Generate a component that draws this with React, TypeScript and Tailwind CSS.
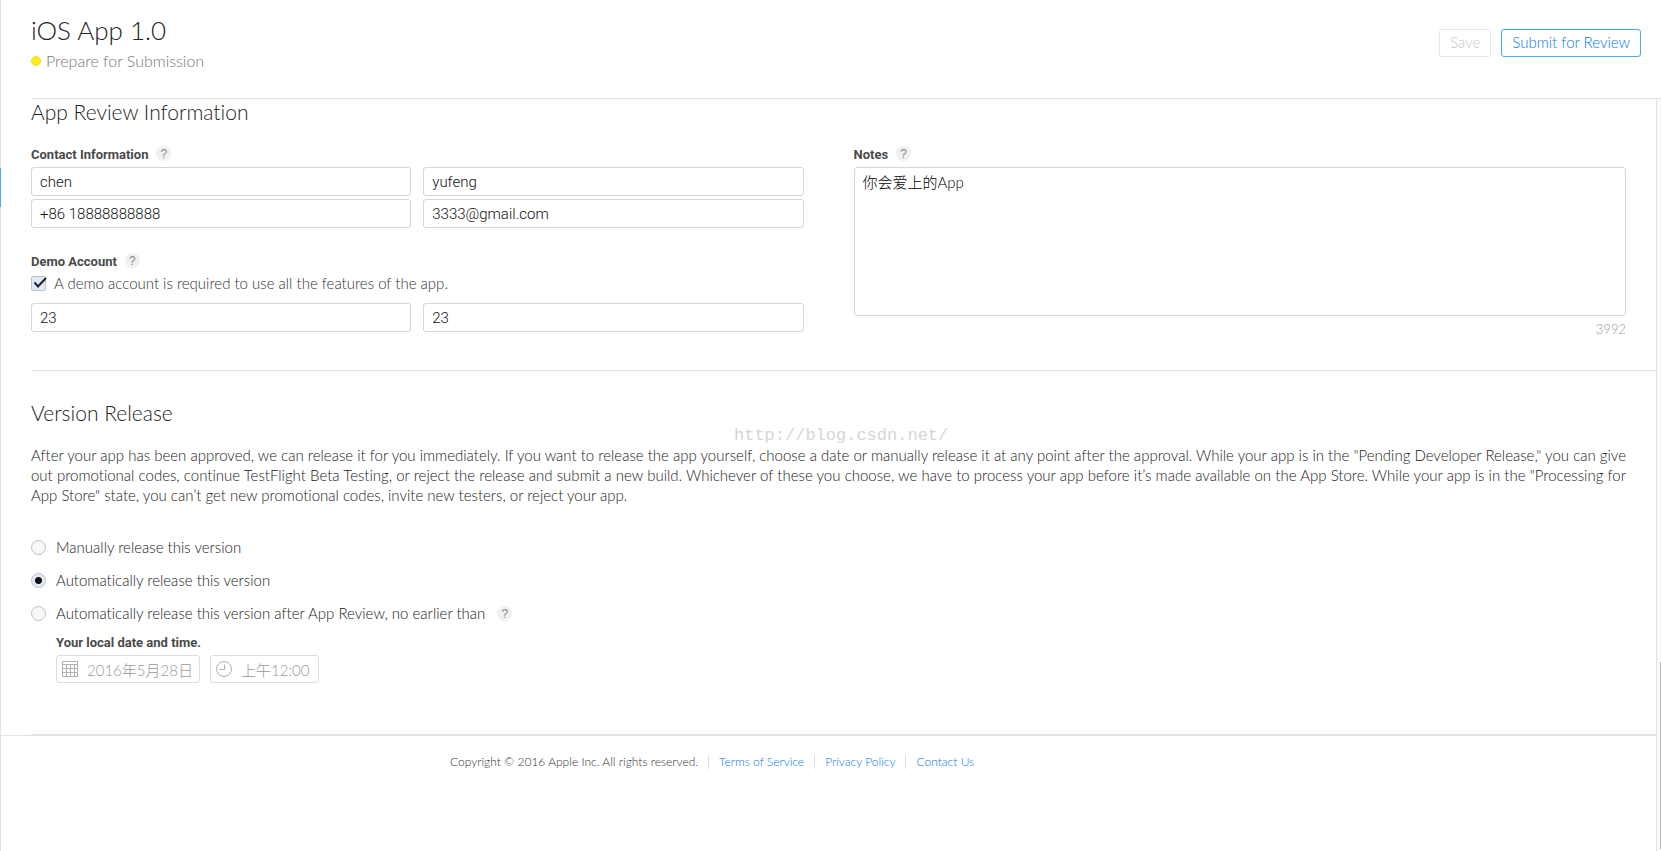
import { useState } from "react"
import clsx from "clsx"

const releaseOptions = [
  { id: "manual", label: "Manually release this version" },
  { id: "auto", label: "Automatically release this version" },
  {
    id: "scheduled",
    label: "Automatically release this version after App Review, no earlier than",
    help: true,
  },
]

const footerLinks = ["Terms of Service", "Privacy Policy", "Contact Us"]

const labelStyle = "font-['Roboto',sans-serif] text-[13px] leading-[18px] font-bold text-[#4a4a4a]"

const HelpButton = ({ label }: { label: string }) => (
  <button
    type="button"
    aria-label={label}
    className="flex size-[15px] shrink-0 items-center justify-center rounded-full bg-[#f0f0f2] font-['Liberation_Sans',sans-serif] text-xs leading-none text-[#888]"
  >
    ?
  </button>
)

const TextField = ({ label, value }: { label: string; value: string }) => (
  <input
    type="text"
    aria-label={label}
    defaultValue={value}
    className="h-[29px] w-full min-w-0 rounded-[3px] border border-[#d6d6d6] bg-white px-2 font-['Roboto',sans-serif] text-[15px] text-[#111] outline-none focus:border-[#4ba8fb]"
  />
)

const CalendarIcon = () => (
  <svg viewBox="0 0 16 16" className="size-4 shrink-0" fill="none" stroke="#b0b0b0" aria-hidden="true">
    <path d="M.5.5h15v15H.5z" />
    <path d="M1 3.5h14M1 7.5h14M1 11.5h14M4.5 4v11M8.5 4v11M12.5 4v11" />
  </svg>
)

const ClockIcon = () => (
  <svg viewBox="0 0 16 16" className="size-4 shrink-0" fill="none" stroke="#b0b0b0" aria-hidden="true">
    <circle cx="8" cy="8" r="7.5" />
    <path d="M8.5 3.5v5h-5" />
  </svg>
)

const Header = () => (
  <header className="ml-[30px] flex h-[99px] items-start justify-between border-b border-[#e3e3e3] pr-5">
    <div className="pt-[14px]">
      <h1 className="text-[26px] leading-[32px] text-[#222]">iOS App 1.0</h1>
      <p className="flex items-center gap-[5px] text-base leading-[30px] text-[#777]">
        <span className="size-[10px] rounded-full border border-[#f0dc1e] bg-[#ffec1f]" />
        Prepare for Submission
      </p>
    </div>
    <div className="flex gap-[10px] pt-[29px] text-[15px]">
      <button
        type="button"
        disabled
        className="h-7 rounded-[3px] border border-[#e5e5e5] px-[10px] pb-[2px] text-[#c8c8c8]"
      >
        Save
      </button>
      <button
        type="button"
        className="h-7 rounded-[3px] border border-[#4ba8fb] px-[10px] pb-[2px] text-[#007af5]"
      >
        Submit for Review
      </button>
    </div>
  </header>
)

const ReviewInformation = () => {
  const [demoRequired, setDemoRequired] = useState(true)

  return (
    <section className="ml-[30px] h-[272px] border-b border-[#e3e3e3] pr-[30px]">
      <h2 className="text-[21px] leading-[26px] text-[#222]">App Review Information</h2>
      <div className="mt-[21px] grid grid-cols-2 gap-[50px]">
        <div>
          <div className="flex h-[21px] items-start gap-2">
            <h3 className={labelStyle}>Contact Information</h3>
            <HelpButton label="About contact information" />
          </div>
          <div className="grid grid-cols-2 gap-x-3 gap-y-[3px]">
            <TextField label="First name" value="chen" />
            <TextField label="Last name" value="yufeng" />
            <TextField label="Phone number" value="+86 18888888888" />
            <TextField label="Email" value="3333@gmail.com" />
          </div>

          <div className="mt-[25px] flex h-[20px] items-start gap-2">
            <h3 className={labelStyle}>Demo Account</h3>
            <HelpButton label="About the demo account" />
          </div>
          <label className="flex h-[20px] items-center gap-2 text-[15px] text-[#333]">
            <span className="grid size-[15px]">
              <input
                type="checkbox"
                checked={demoRequired}
                onChange={(e) => setDemoRequired(e.target.checked)}
                className="col-start-1 row-start-1 size-[15px] appearance-none rounded-[2px] border border-[#c0c0c4] bg-[#f8f8f8] checked:bg-[#dfeafa]"
              />
              {demoRequired && (
                <svg
                  viewBox="0 0 15 15"
                  className="pointer-events-none col-start-1 row-start-1 size-[15px] overflow-visible"
                  fill="none"
                  stroke="#222"
                  strokeWidth="2"
                  aria-hidden="true"
                >
                  <path d="M3.5 6.5 7 10.5 15 2" />
                </svg>
              )}
            </span>
            A demo account is required to use all the features of the app.
          </label>
          <div className="mt-[10px] grid grid-cols-2 gap-x-3">
            <TextField label="Demo user name" value="23" />
            <TextField label="Demo password" value="23" />
          </div>
        </div>

        <div>
          <div className="flex h-[21px] items-start gap-2">
            <label htmlFor="notes" className={labelStyle}>
              Notes
            </label>
            <HelpButton label="About notes" />
          </div>
          <textarea
            id="notes"
            defaultValue="你会爱上的App"
            className="block h-[149px] w-full resize-none rounded-[3px] border border-[#d6d6d6] px-2 py-[4px] text-[15px] leading-[20px] text-black outline-none focus:border-[#4ba8fb]"
          />
          <p className="mt-[3px] text-right text-[13px] leading-[20px] text-[#999]">3992</p>
        </div>
      </div>
    </section>
  )
}

const VersionRelease = () => {
  const [release, setRelease] = useState("auto")

  return (
    <section className="ml-[30px] h-[364px] border-b border-[#e3e3e3] pt-[29px] pr-[30px]">
      <h2 className="text-[21px] leading-[26px] text-[#222]">Version Release</h2>
      <p className="mt-[19px] text-justify text-[15px] leading-[20px] text-[#222]">
        After your app has been approved, we can release it for you immediately. If you want to release the app
        yourself, choose a date or manually release it at any point after the approval. While your app is in the
        "Pending Developer Release," you can give out promotional codes, continue TestFlight Beta Testing, or
        reject the release and submit a new build. Whichever of these you choose, we have to process your app
        before it’s made available on the App Store. While your app is in the "Processing for App Store" state,
        you can’t get new promotional codes, invite new testers, or reject your app.
      </p>

      <div role="radiogroup" aria-label="Version release" className="mt-[26px]">
        {releaseOptions.map((option) => (
          <div key={option.id} className="flex h-[33px] items-center gap-3">
            <label className="flex items-center gap-[10px] text-[15px] text-[#222]">
              <input
                type="radio"
                name="release"
                checked={release === option.id}
                onChange={() => setRelease(option.id)}
                className={clsx(
                  "size-[15px] appearance-none rounded-full border border-[#c0c0c4] bg-[#f8f8f8]",
                  "checked:bg-[radial-gradient(circle,#111_3px,#dfeafa_4px)]"
                )}
              />
              {option.label}
            </label>
            {option.help && <HelpButton label="About scheduled release" />}
          </div>
        ))}
      </div>

      <div className="pt-1 pl-[25px]">
        <h3 className={labelStyle}>Your local date and time.</h3>
        <div className="mt-[3px] flex gap-[10px] text-[15px] text-[#999]">
          <label className="flex h-7 items-center gap-[9px] rounded-[3px] border border-[#dcdcdc] px-[5px]">
            <CalendarIcon />
            <input
              type="text"
              aria-label="Release date"
              disabled
              defaultValue="2016年5月28日"
              className="w-[107px] pt-[2px]"
            />
          </label>
          <label className="flex h-7 items-center gap-[9px] rounded-[3px] border border-[#dcdcdc] px-[5px]">
            <ClockIcon />
            <input
              type="text"
              aria-label="Release time"
              disabled
              defaultValue="上午12:00"
              className="w-[72px] pt-[2px]"
            />
          </label>
        </div>
      </div>
    </section>
  )
}

const Footer = () => (
  <footer className="flex items-center border-t border-[#e3e3e3] pt-[19px] pl-[449px] text-xs leading-[14px]">
    <span className="pr-[10px] text-[#333]">Copyright © 2016 Apple Inc. All rights reserved.</span>
    {footerLinks.map((link) => (
      <a key={link} href="#" className="border-l border-[#ddd] px-[10px] text-[#007af5]">
        {link}
      </a>
    ))}
  </footer>
)

export default function App() {
  return (
    <div className="relative flex min-h-screen bg-white font-['Lato','Noto_Sans_CJK_SC',sans-serif] font-light [font-variant-ligatures:none]">
      {/* edge of the version list, with the selected version marked */}
      <div className="w-px shrink-0 bg-[#e3e3e3] pt-[168px]">
        <div className="h-[39px] bg-[#4ba8fb]" />
      </div>

      <div className="flex min-w-0 grow flex-col">
        <Header />
        <div className="flex grow">
          <main className="min-w-0 grow">
            <ReviewInformation />
            <VersionRelease />
            <Footer />
          </main>
          {/* scroll track */}
          <div className="flex w-[5px] shrink-0 flex-col items-end border-l border-[#e3e3e3] bg-[#fafafa] pt-[563px] pb-[2px]">
            <div className="w-px grow bg-[#bbb]" />
          </div>
        </div>
      </div>

      <p className="pointer-events-none absolute top-[424px] left-[734px] font-['Liberation_Mono',monospace] text-[17px] leading-[24px] text-[#d6d6d0]">
        http://blog.csdn.net/
      </p>
    </div>
  )
}
